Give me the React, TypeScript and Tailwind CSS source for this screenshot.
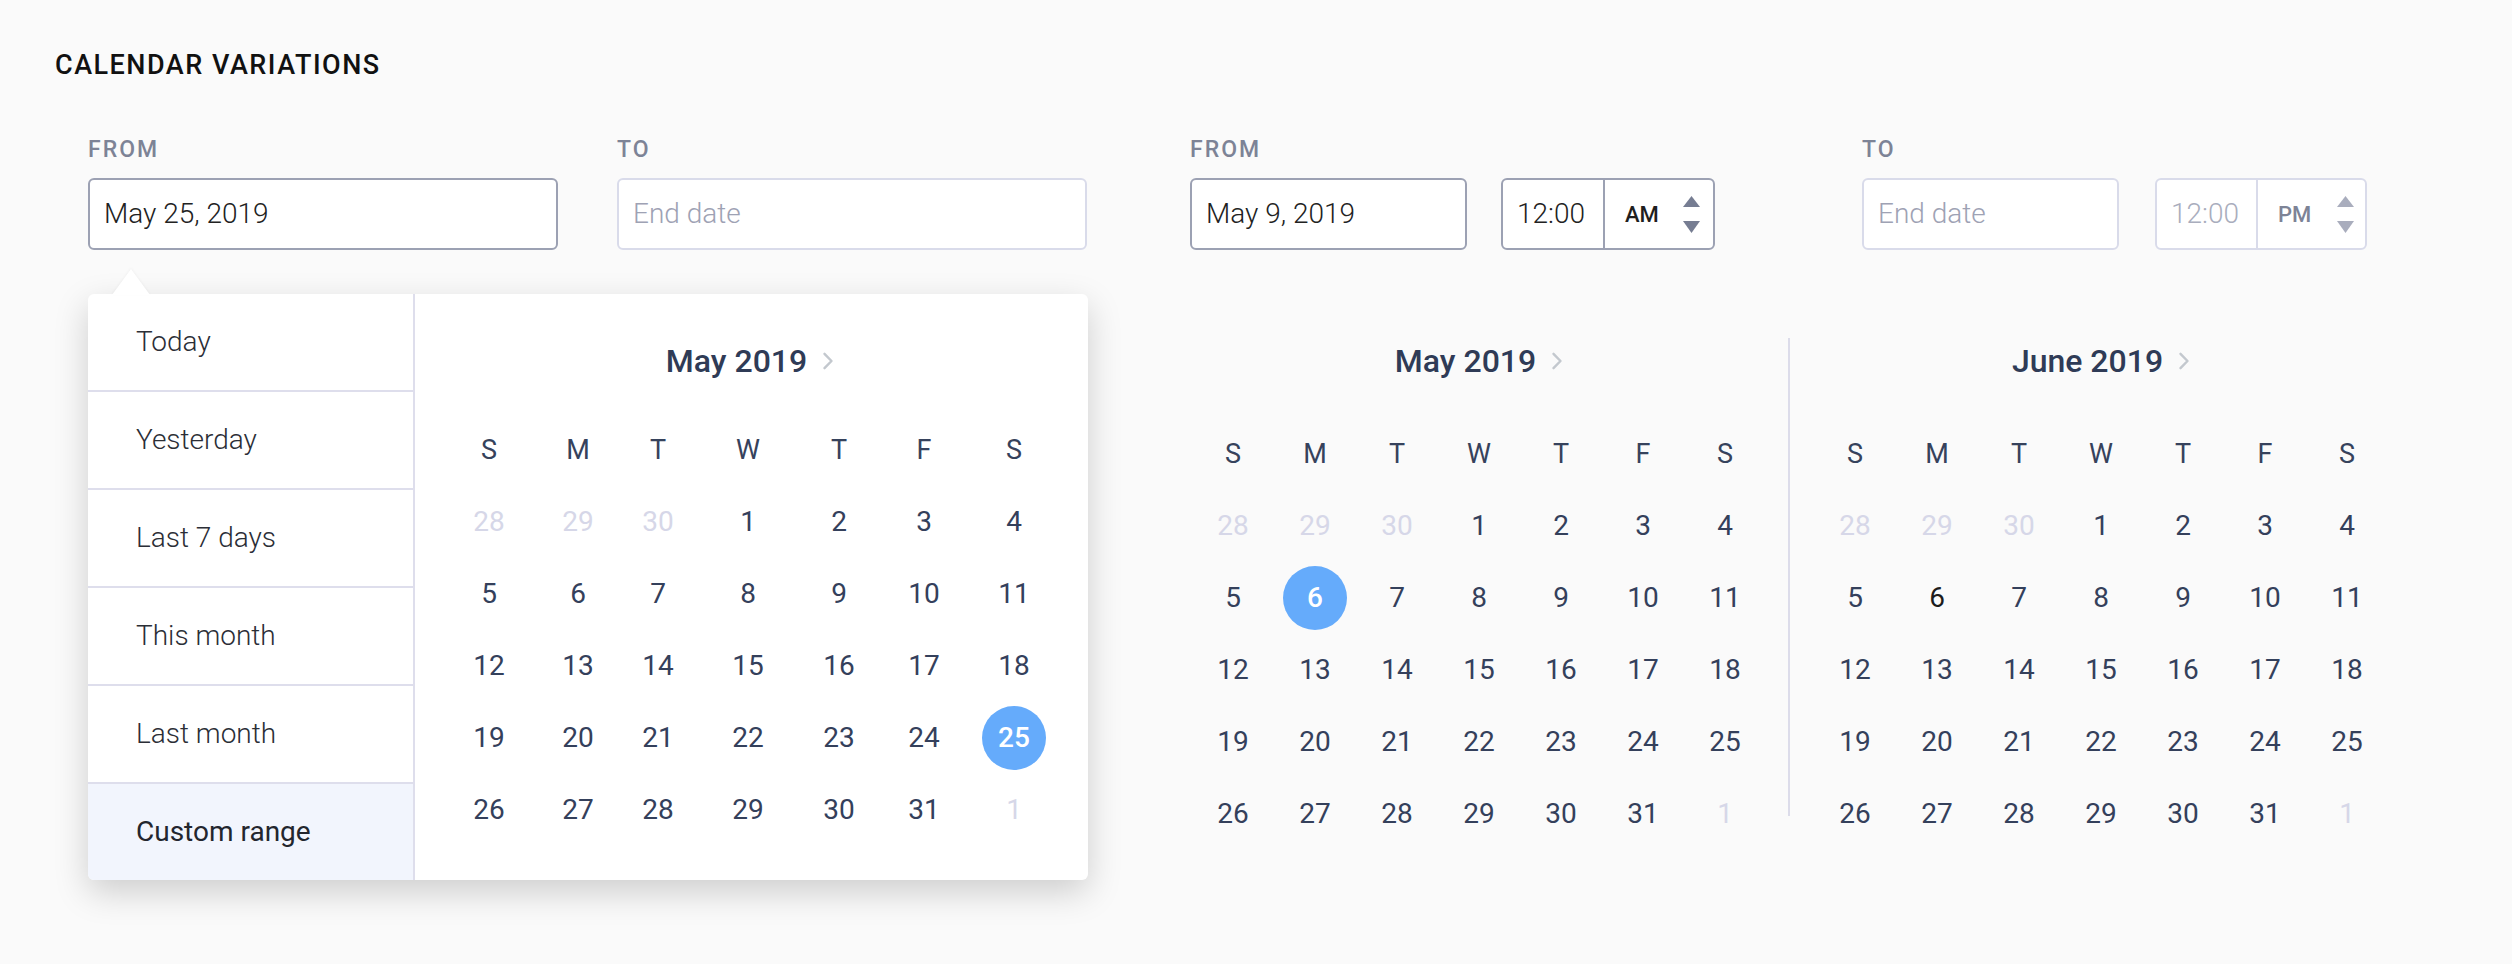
import React from "react";

type Cell = { d: number; muted?: boolean };

const weeks: Cell[][] = [
  [{ d: 28, muted: true }, { d: 29, muted: true }, { d: 30, muted: true }, { d: 1 }, { d: 2 }, { d: 3 }, { d: 4 }],
  [{ d: 5 }, { d: 6 }, { d: 7 }, { d: 8 }, { d: 9 }, { d: 10 }, { d: 11 }],
  [{ d: 12 }, { d: 13 }, { d: 14 }, { d: 15 }, { d: 16 }, { d: 17 }, { d: 18 }],
  [{ d: 19 }, { d: 20 }, { d: 21 }, { d: 22 }, { d: 23 }, { d: 24 }, { d: 25 }],
  [{ d: 26 }, { d: 27 }, { d: 28 }, { d: 29 }, { d: 30 }, { d: 31 }, { d: 1, muted: true }],
];

const weekdays = ["S", "M", "T", "W", "T", "F", "S"];

function Chevron() {
  return (
    <svg width="12" height="18" viewBox="0 0 12 18" fill="none">
      <path d="M2.5 1.8L9.5 9L2.5 16.2" stroke="#c3c8ce" strokeWidth="2.4" strokeLinecap="round" strokeLinejoin="round" />
    </svg>
  );
}

function Spinner({ color }: { color: string }) {
  return (
    <svg width="17" height="37" viewBox="0 0 17 37">
      <polygon points="8.5,0 17,11 0,11" fill={color} />
      <polygon points="0,25 17,25 8.5,37" fill={color} />
    </svg>
  );
}

function Calendar({
  title,
  gridClass,
  selected,
  dark,
  weekdayGap,
}: {
  title: string;
  gridClass: string;
  selected?: number;
  dark?: number;
  weekdayGap: string;
}) {
  return (
    <div className="flex flex-col">
      <div className="h-[46px] flex items-center justify-center gap-[15px]">
        <span className="text-[32px] leading-none font-medium text-[#2f3b56]">{title}</span>
        <Chevron />
      </div>
      <div className={`grid ${gridClass} ${weekdayGap}`}>
        {weekdays.map((w, i) => (
          <div key={i} className="h-[72px] flex items-center justify-center text-[27px] text-[#36425c]">
            {w}
          </div>
        ))}
        {weeks.map((row, ri) =>
          row.map((c, ci) => {
            const isSel = !c.muted && selected === c.d;
            const isDark = !c.muted && dark === c.d;
            return (
              <div key={`${ri}-${ci}`} className="h-[72px] flex items-center justify-center">
                {isSel ? (
                  <span className="w-[64px] h-[64px] rounded-full bg-[#65abfb] text-white font-medium text-[28px] flex items-center justify-center">
                    {c.d}
                  </span>
                ) : (
                  <span
                    className={`text-[28px] ${
                      c.muted ? "text-[#d6d7e8]" : isDark ? "text-[#1c1c1c]" : "text-[#34405b]"
                    }`}
                  >
                    {c.d}
                  </span>
                )}
              </div>
            );
          })
        )}
      </div>
    </div>
  );
}

function Label({ children }: { children: React.ReactNode }) {
  return (
    <div className="text-[23px] leading-[26px] font-medium tracking-[2px] text-[#7d8396] mb-[15px]">{children}</div>
  );
}

const sideItems = ["Today", "Yesterday", "Last 7 days", "This month", "Last month", "Custom range"];

export default function App() {
  return (
    <div className="min-h-screen w-full bg-[#fafafa] font-['Roboto',sans-serif] pt-[49px]">
      <h1 className="pl-[55px] text-[27px] leading-[32px] font-medium tracking-[1.5px] text-[#111111]">
        CALENDAR VARIATIONS
      </h1>
      <div className="mt-[56px] pl-[88px] flex gap-[102px] items-start">
        {/* Left group */}
        <div className="w-[1000px]">
          <div className="flex gap-[59px]">
            <div>
              <Label>FROM</Label>
              <div className="w-[470px] h-[72px] border-2 border-[#9ca1b3] rounded-[6px] bg-white flex items-center pl-[14px] text-[28px] font-light text-[#222222]">
                May 25, 2019
              </div>
            </div>
            <div>
              <Label>TO</Label>
              <div className="w-[470px] h-[72px] border-2 border-[#d9dbea] rounded-[6px] bg-white flex items-center pl-[14px] text-[28px] font-light text-[#9ea2b4]">
                End date
              </div>
            </div>
          </div>

          <div className="relative mt-[44px] flex bg-white rounded-[6px] shadow-[0_12px_34px_rgba(0,0,0,0.18)]">
            <svg
              className="absolute left-[23px] -top-[25px] drop-shadow-[0_-1px_1px_rgba(0,0,0,0.04)]"
              width="40"
              height="26"
              viewBox="0 0 40 26"
            >
              <polygon points="1,26 20,0 39,26" fill="#ffffff" />
            </svg>
            <div className="w-[327px] border-r-2 border-[#dedeec] flex flex-col">
              {sideItems.map((s, i) => {
                const last = i === sideItems.length - 1;
                return (
                  <div
                    key={s}
                    className={`flex items-center pl-[48px] text-[28px] ${
                      last
                        ? "h-[96px] bg-[#f2f5fd] text-[#23262e] font-normal rounded-bl-[6px]"
                        : "h-[98px] border-b-2 border-[#dedeec] text-[#2b2e36] font-light"
                    }`}
                  >
                    {s}
                  </div>
                );
              })}
            </div>
            <div className="pl-[30px] pt-[44px]">
              <Calendar
                title="May 2019"
                gridClass="grid-cols-[88px_90px_70px_110px_72px_98px_82px]"
                selected={25}
                weekdayGap="mt-[30px]"
              />
            </div>
          </div>
        </div>

        {/* Right group */}
        <div>
          <div className="flex gap-[147px]">
            <div>
              <Label>FROM</Label>
              <div className="flex gap-[34px]">
                <div className="w-[277px] h-[72px] border-2 border-[#9ca1b3] rounded-[6px] bg-white flex items-center pl-[14px] text-[28px] font-light text-[#222222]">
                  May 9, 2019
                </div>
                <div className="w-[214px] h-[72px] border-2 border-[#9ca1b3] rounded-[6px] bg-white flex">
                  <div className="w-[100px] flex items-center pl-[14px] text-[28px] font-light text-[#222222]">12:00</div>
                  <div className="flex-1 border-l-2 border-[#9ca1b3] flex items-center justify-between pl-[20px] pr-[13px]">
                    <span className="text-[22px] font-medium text-[#1f1f1f]">AM</span>
                    <Spinner color="#767d92" />
                  </div>
                </div>
              </div>
            </div>
            <div>
              <Label>TO</Label>
              <div className="flex gap-[36px]">
                <div className="w-[257px] h-[72px] border-2 border-[#d9dbea] rounded-[6px] bg-white flex items-center pl-[14px] text-[28px] font-light text-[#9ea2b4]">
                  End date
                </div>
                <div className="w-[212px] h-[72px] border-2 border-[#d9dbea] rounded-[6px] bg-white flex">
                  <div className="w-[99px] flex items-center pl-[14px] text-[28px] font-light text-[#a9adbd]">12:00</div>
                  <div className="flex-1 border-l-2 border-[#d9dbea] flex items-center justify-between pl-[20px] pr-[11px]">
                    <span className="text-[22px] font-medium text-[#7d8396]">PM</span>
                    <Spinner color="#a9adbd" />
                  </div>
                </div>
              </div>
            </div>
          </div>

          <div className="mt-[88px] ml-[2px] flex items-start">
            <Calendar title="May 2019" gridClass="grid-cols-[repeat(7,82px)]" selected={6} weekdayGap="mt-[34px]" />
            <div className="w-[2px] h-[478px] bg-[#dcdcea] ml-[22px] mr-[24px]" />
            <Calendar title="June 2019" gridClass="grid-cols-[repeat(7,82px)]" dark={6} weekdayGap="mt-[34px]" />
          </div>
        </div>
      </div>
    </div>
  );
}
